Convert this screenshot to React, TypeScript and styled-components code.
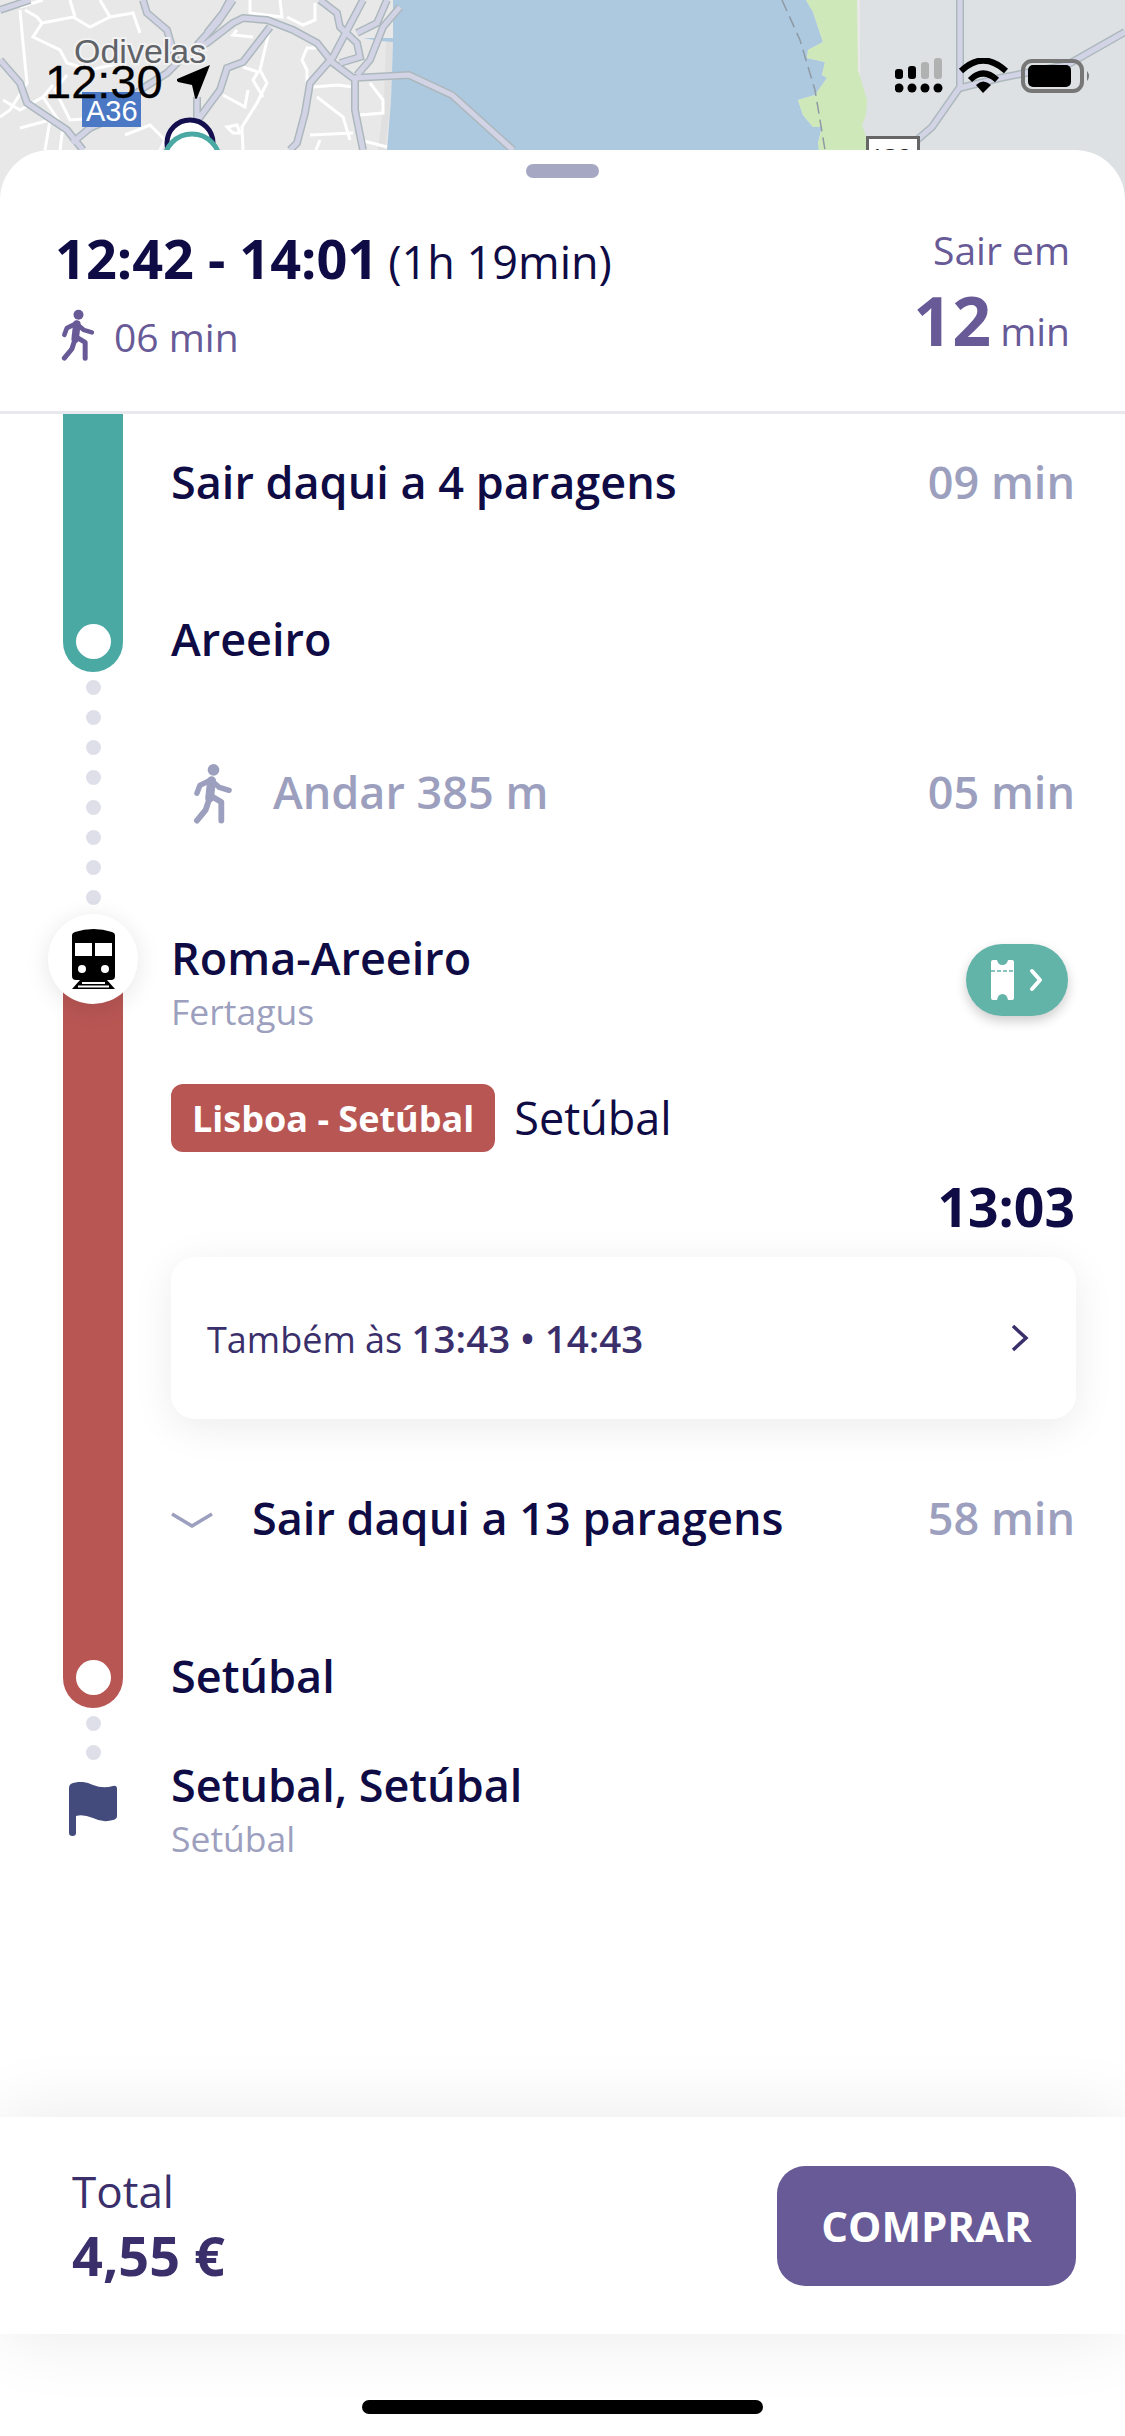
import React from "react";
import styled, { createGlobalStyle } from "styled-components";

const GlobalStyle = createGlobalStyle`
  html, body {
    margin: 0;
    padding: 0;
    background: #fff;
    font-family: "Open Sans", "Liberation Sans", sans-serif;
  }
  * { box-sizing: border-box; }
`;

const NAVY = "#0f0b45";
const INDIGO = "#3a2f6b";
const PURPLE = "#675a97";
const MUTED = "#9c9fbe";
const TEAL = "#4ba9a4";
const RED = "#b85654";

const Page = styled.div`
  width: 1125px;
  height: 2436px;
  display: flex;
  flex-direction: column;
  overflow: hidden;
  background: #fff;
`;

/* map + status bar */
const MapArea = styled.div`
  position: relative;
  flex: none;
  height: 200px;
  margin-bottom: -50px;
  background: #e8e8e8;
`;

const MapDrawing = styled.svg`
  display: block;
  width: 1125px;
  height: 200px;
`;

const StatusBar = styled.div`
  position: absolute;
  top: 58px;
  left: 45px;
  right: 34px;
  display: flex;
  justify-content: space-between;
  align-items: flex-start;
`;

const StatusTime = styled.div`
  display: flex;
  align-items: center;
  gap: 14px;
  font-family: "Liberation Sans", sans-serif;
  font-size: 47px;
  line-height: 48px;
  color: #000;
  -webkit-text-stroke: 0.3px #000;
`;

/* bottom sheet */
const Sheet = styled.div`
  position: relative;
  flex: 1;
  min-height: 0;
  display: flex;
  flex-direction: column;
  background: #fff;
  border-radius: 50px 50px 0 0;
`;

const Handle = styled.div`
  flex: none;
  width: 73px;
  height: 14px;
  margin: 14px auto 0;
  border-radius: 7px;
  background: #a5a7c3;
`;

const Summary = styled.header`
  flex: none;
  height: 236px;
  padding: 50px 55px 0 55px;
  display: flex;
  justify-content: space-between;
  border-bottom: 3px solid #e8e8ee;
`;

const SummaryLeft = styled.div`
  display: flex;
  flex-direction: column;
  gap: 23px;
`;

const TripTime = styled.div`
  display: flex;
  align-items: baseline;
  gap: 10px;
  height: 60px;
  color: ${NAVY};
`;

const TripHours = styled.span`
  font-size: 54px;
  line-height: 60px;
  font-weight: 700;
`;

const TripDuration = styled.span`
  font-size: 45px;
  line-height: 60px;
`;

const WalkSummary = styled.div`
  display: flex;
  align-items: center;
  gap: 18px;
  padding-left: 6px;
  height: 50px;
  color: ${PURPLE};
  font-size: 39px;
`;

const SummaryRight = styled.div`
  display: flex;
  flex-direction: column;
  align-items: flex-end;
  margin-top: -3px;
  color: ${PURPLE};
  font-size: 39px;
  line-height: 50px;
`;

const LeaveIn = styled.div`
  display: flex;
  align-items: baseline;
  gap: 9px;
  height: 72px;
  margin-top: 9px;
  line-height: 72px;
`;

const LeaveNumber = styled.span`
  font-size: 68px;
  font-weight: 700;
`;

/* timeline */
const Timeline = styled.div`
  flex: 1;
  min-height: 0;
  display: flex;
  gap: 48px;
  padding: 0 50px 0 63px;
`;

const Rail = styled.div`
  flex: none;
  width: 60px;
  display: flex;
  flex-direction: column;
  align-items: center;
`;

const LineBar = styled.div<{ $color: string; $height: number; $offset?: number }>`
  position: relative;
  flex: none;
  width: 60px;
  height: ${(p) => p.$height}px;
  margin-top: ${(p) => p.$offset ?? 0}px;
  padding-bottom: 13px;
  display: flex;
  justify-content: center;
  align-items: flex-end;
  background: ${(p) => p.$color};
  border-radius: 0 0 30px 30px;
`;

const StopDot = styled.div`
  width: 35px;
  height: 35px;
  border-radius: 50%;
  background: #fff;
`;

const TrainBadge = styled.div`
  position: absolute;
  top: -45px;
  left: -15px;
  width: 90px;
  height: 90px;
  display: flex;
  align-items: center;
  justify-content: center;
  border-radius: 50%;
  background: #fff;
  box-shadow: 0 4px 24px rgba(0, 0, 0, 0.1);
`;

const DotColumn = styled.div<{ $gap: number }>`
  flex: none;
  display: flex;
  flex-direction: column;
  gap: ${(p) => p.$gap}px;
  margin-top: 8px;
`;

const TrailDot = styled.div`
  width: 15px;
  height: 15px;
  border-radius: 50%;
  background: #dfdfea;
`;

const FlagIcon = styled.svg`
  flex: none;
  margin-top: 22px;
`;

const Steps = styled.div`
  flex: 1;
  min-width: 0;
  display: flex;
  flex-direction: column;
`;

const Row = styled.div<{ $height: number }>`
  flex: none;
  height: ${(p) => p.$height}px;
  display: flex;
  align-items: center;
  justify-content: space-between;
`;

const RowStart = styled.div`
  display: flex;
  align-items: center;
`;

const StepTitle = styled.div`
  padding-bottom: 4px;
  font-size: 45px;
  line-height: 60px;
  font-weight: 600;
  color: ${NAVY};
`;

const StepMinutes = styled.div`
  padding-bottom: 4px;
  font-size: 45px;
  line-height: 60px;
  font-weight: 600;
  color: ${MUTED};
`;

const WalkLabel = styled.div`
  padding-bottom: 4px;
  font-size: 45px;
  line-height: 60px;
  font-weight: 600;
  color: ${MUTED};
`;

const WalkIconSlot = styled.div`
  width: 102px;
  padding-left: 22px;
  display: flex;
`;

const StationRow = styled.div`
  flex: none;
  margin-top: 68px;
  display: flex;
  justify-content: space-between;
  align-items: flex-start;
`;

const Operator = styled.div`
  margin-top: -3px;
  font-size: 35.500px;
  line-height: 44px;
  color: ${MUTED};
`;

const TicketButton = styled.div`
  flex: none;
  width: 102px;
  height: 72px;
  margin: 16px 7px 0 0;
  display: flex;
  align-items: center;
  justify-content: center;
  border-radius: 36px;
  background: #62b3a8;
  box-shadow: 0 5px 12px rgba(0, 0, 0, 0.2);
`;

const LineRow = styled.div`
  flex: none;
  margin-top: 51px;
  display: flex;
  align-items: center;
  gap: 19px;
`;

const LineBadge = styled.div`
  height: 68px;
  padding: 0 21px;
  display: flex;
  align-items: center;
  border-radius: 12px;
  background: ${RED};
  color: #fff;
  font-size: 36px;
  font-weight: 700;
`;

const Direction = styled.div`
  padding-bottom: 2px;
  font-size: 45px;
  color: ${NAVY};
`;

const Departure = styled.div`
  flex: none;
  margin-top: 25px;
  text-align: right;
  font-size: 53.500px;
  line-height: 60px;
  font-weight: 700;
  color: ${NAVY};
`;

const AlsoCard = styled.div`
  flex: none;
  height: 162px;
  margin: 20px -1px 0 0;
  padding: 0 46px 0 36px;
  display: flex;
  align-items: center;
  justify-content: space-between;
  border-radius: 24px;
  background: #fff;
  box-shadow: 0 8px 40px rgba(0, 0, 0, 0.08);
  font-size: 36px;
  color: ${INDIGO};
`;

const AlsoTimes = styled.b`
  font-size: 38.500px;
  font-weight: 600;
`;

const CollapseIcon = styled.svg`
  flex: none;
  margin-right: 39px;
`;

const Destination = styled.div`
  flex: none;
  margin-top: 20px;
`;

/* footer */
const Footer = styled.footer`
  position: relative;
  flex: none;
  height: 217px;
  padding: 0 49px 0 72px;
  display: flex;
  align-items: center;
  justify-content: space-between;
  background: #fff;
  box-shadow: 0 0 70px rgba(0, 0, 0, 0.09);
`;

const TotalBlock = styled.div`
  color: ${INDIGO};
`;

const TotalLabel = styled.div`
  margin-top: -2px;
  font-size: 44px;
  line-height: 60px;
`;

const TotalValue = styled.div`
  font-size: 54px;
  line-height: 68px;
  font-weight: 700;
`;

const BuyButton = styled.button`
  width: 299px;
  height: 120px;
  border: none;
  border-radius: 28px;
  background: ${PURPLE};
  color: #fff;
  font-family: inherit;
  font-size: 42px;
  font-weight: 700;
`;

const HomeArea = styled.div`
  position: relative;
  flex: none;
  height: 102px;
  padding-top: 66px;
  display: flex;
  justify-content: center;
`;

const HomeIndicator = styled.div`
  width: 401px;
  height: 14px;
  border-radius: 7px;
  background: #000;
`;

const minorRoads = [
  "M20 10 L23 43 L27 83 L10 110 L0 117",
  "M25 10 L37 17 L42 23 L33 37 L60 50 L67 63 L90 70 L125 62",
  "M42 23 L73 17 L90 27 L110 17 L133 13 L140 33",
  "M20 7 L43 0 M70 0 L75 17 M100 0 L110 17",
  "M3 100 L20 110 L43 97 L53 85 M43 97 L63 127 L60 150",
  "M67 75 L55 90 L70 120 L100 118",
  "M125 135 L150 125 L165 140 L160 150 M20 128 L50 120 L45 150",
  "M250 0 L250 13 L282 17 L280 0 M237 30 L233 35 L253 37",
  "M315 3 L315 20 L303 25 L287 17 M263 20 L250 13",
  "M270 28 L260 70 L267 83 L257 103 L242 127 L243 150",
  "M243 67 L258 72 L253 80 L263 97 M223 95 L245 107 L248 90",
  "M227 127 L237 125 L240 133 L233 133 Z",
  "M320 48 L307 48 L302 60 L307 70 L307 83",
  "M313 87 L338 85 L353 87 M317 97 L343 117 L350 140 M310 135 L353 133",
  "M360 115 L383 113 L383 100 L370 83 M360 140 L387 147 M320 140 L316 150",
];

const majorRoads = [
  "M197 48 L207 43 L233 23 L243 18 L267 20 L293 30 L317 43 L333 63 L353 78 L409 75 L452 95 L513 150",
  "M363 0 L333 57 L310 83 L305 113 L297 143 L290 150",
  "M270 27 L243 62 L227 68 L220 90 L200 117 L197 122 L197 97",
  "M320 0 L337 13 L340 27 L357 43 L360 57 L340 63",
  "M387 0 L377 23 L357 33",
  "M400 7 L383 27 L370 60 L357 75",
  "M355 80 L355 110 L363 150",
  "M207 33 L223 13 L230 0",
  "M197 45 L218 22 L233 0",
  "M143 0 L147 13 L167 30 L177 63 L167 73 L140 90",
  "M0 60 L20 83 L27 103 L67 130 L83 150",
  "M72 143 L90 128 L113 118 L140 90",
  "M30 0 L0 10",
  "M960 0 L960 87 L932 127 L917 140",
  "M1125 32 L1067 65 L1000 78 L960 88",
];

const Walker = ({ color, width }: { color: string; width: number }) => (
  <svg width={width} height={(width * 64) / 42} viewBox="14 10 42 64">
    <circle cx="35" cy="17" r="6" fill={color} />
    <path d="M33 28 L31 46" fill="none" stroke={color} strokeWidth="9" strokeLinecap="round" />
    <path d="M33 27 L21 33 L18 41 M33 28 L41 35 L51 38" fill="none" stroke={color} strokeWidth="5.500" strokeLinecap="round" strokeLinejoin="round" />
    <path d="M31 46 L27 58 L18 69 M33 44 L43 50 L43 69" fill="none" stroke={color} strokeWidth="6" strokeLinecap="round" strokeLinejoin="round" />
  </svg>
);

const TrainGlyph = () => (
  <svg width="43" height="60" viewBox="0 0 43 60">
    <path d="M0 6 Q0 4 3 3 Q12 0 21.500 0 Q31 0 40 3 Q43 4 43 6 L43 47 Q43 51 39 51 L4 51 Q0 51 0 47 Z" fill="#000" />
    <rect x="3" y="14" width="17" height="13" fill="#fff" />
    <rect x="23" y="14" width="17" height="13" fill="#fff" />
    <circle cx="10" cy="40" r="4" fill="#fff" />
    <circle cx="33" cy="40" r="4" fill="#fff" />
    <path d="M8 51 L35 51 L43 60 L0 60 Z" fill="#000" />
    <path d="M10 54 H33 M6 57.500 H37" stroke="#fff" strokeWidth="2" />
  </svg>
);

const TicketGlyph = () => (
  <svg width="54" height="42" viewBox="0 0 54 42">
    <path d="M3 1 H7 Q8 6 12.500 6 Q17 6 18 1 H22 Q24 1 24 3 V39 Q24 41 22 41 H18 Q17 35 12.500 35 Q8 35 7 41 H3 Q1 41 1 39 V3 Q1 1 3 1 Z" fill="#fff" />
    <path d="M1 12 H24" stroke="#62b3a8" strokeWidth="1.500" strokeDasharray="4 2" />
    <path d="M42 12 L50 21 L42 30" fill="none" stroke="#fff" strokeWidth="4" strokeLinecap="round" strokeLinejoin="round" />
  </svg>
);

const App: React.FC = () => {
  return (
    <Page>
      <GlobalStyle />
      <MapArea>
        <MapDrawing viewBox="0 0 1125 200">
          <rect x="0" y="0" width="396" height="200" fill="#e8e8e8" />
          <rect x="860" y="0" width="265" height="200" fill="#dde1e3" />
          <path d="M386 40 L393 40 L391 100 L385 150 L378 150 L384 100 Z" fill="#e0e0e0" />
          <path d="M393 0 L393 38 L363 38 L380 41 L393 42 L391 100 L383 200 L830 200 L823 150 L818 143 L822 127 L813 127 L803 115 L798 100 L815 95 L827 78 L822 75 L825 62 L807 58 L808 50 L823 42 L813 12 L806 0 Z" fill="#adc9e0" />
          <path d="M806 0 L813 12 L823 42 L808 50 L807 58 L825 62 L822 75 L827 78 L815 95 L798 100 L803 115 L813 127 L822 127 L818 143 L823 200 L870 200 L867 140 L862 125 L866 115 L867 100 L858 70 L857 0 Z" fill="#cfe8b9" />
          <path d="M782 0 L800 40 L815 90 L825 150" fill="none" stroke="#8f9aa5" strokeWidth="1.500" strokeDasharray="12 6" />
          {minorRoads.map((d) => (
            <path key={d} d={d} fill="none" stroke="#fff" strokeWidth="3" />
          ))}
          {majorRoads.map((d) => (
            <path key={d} d={d} fill="none" stroke="#adb8bd" strokeWidth="8" />
          ))}
          {majorRoads.map((d) => (
            <path key={`${d}-fill`} d={d} fill="none" stroke="#d2d4e6" strokeWidth="5" />
          ))}
          <text x="74" y="63" fontFamily="Liberation Sans" fontSize="34" fill="#5f6368" stroke="#f2f2f2" strokeWidth="4" paintOrder="stroke">
            Odivelas
          </text>
          <rect x="82" y="92" width="59" height="35" fill="#4a78c4" />
          <text x="86" y="121" fontFamily="Liberation Sans" fontSize="29" fill="#fff">
            A36
          </text>
          <circle cx="190" cy="143" r="23" fill="#fff" stroke="#14104f" strokeWidth="5" />
          <circle cx="192" cy="162" r="28" fill="#fff" stroke={TEAL} strokeWidth="5" />
          <rect x="867.500" y="137.500" width="51" height="60" fill="#fff" stroke="#666" strokeWidth="3" />
          <text x="874" y="166" fontFamily="Liberation Sans" fontSize="24" fill="#222">
            IC3
          </text>
        </MapDrawing>
        <StatusBar>
          <StatusTime>
            12:30
            <svg width="34" height="34" viewBox="0 0 34 34">
              <path d="M33 0 L0 14 Q-1 15 1 17 L15 20 L18 33 Q19 35 20 33 Z" fill="#000" />
            </svg>
          </StatusTime>
          <svg width="196" height="38" viewBox="0 0 196 38">
            <rect x="0" y="11" width="8" height="10" rx="3" fill="#000" />
            <rect x="13" y="8" width="8" height="13" rx="3" fill="#000" />
            <rect x="26" y="4" width="8" height="17" rx="3" fill="#b0b2b2" />
            <rect x="39" y="0" width="8" height="21" rx="3" fill="#b0b2b2" />
            <circle cx="4" cy="30" r="4.500" fill="#000" />
            <circle cx="17" cy="30" r="4.500" fill="#000" />
            <circle cx="30" cy="30" r="4.500" fill="#000" />
            <circle cx="43" cy="30" r="4.500" fill="#000" />
            <path d="M66 13 Q88 -8 111 13" fill="none" stroke="#000" strokeWidth="6" />
            <path d="M75 22 Q88 9 102 22" fill="none" stroke="#000" strokeWidth="6" />
            <path d="M81 27 Q88 20 96 27 L88 35 Z" fill="#000" />
            <rect x="128" y="3" width="59" height="30" rx="9" fill="none" stroke="#777" strokeWidth="4" />
            <rect x="133" y="7" width="43" height="22" rx="5" fill="#000" />
            <path d="M192 13 Q196 18 192 23 Z" fill="#777" />
          </svg>
        </StatusBar>
      </MapArea>

      <Sheet>
        <Handle />
        <Summary>
          <SummaryLeft>
            <TripTime>
              <TripHours>12:42 - 14:01</TripHours>
              <TripDuration>(1h 19min)</TripDuration>
            </TripTime>
            <WalkSummary>
              <Walker color={PURPLE} width={35} />
              06 min
            </WalkSummary>
          </SummaryLeft>
          <SummaryRight>
            Sair em
            <LeaveIn>
              <LeaveNumber>12</LeaveNumber>
              min
            </LeaveIn>
          </SummaryRight>
        </Summary>

        <Timeline>
          <Rail>
            <LineBar $color={TEAL} $height={258}>
              <StopDot />
            </LineBar>
            <DotColumn $gap={15}>
              {Array.from({ length: 8 }, (_, i) => (
                <TrailDot key={i} />
              ))}
            </DotColumn>
            <LineBar $color={RED} $height={749} $offset={54}>
              <TrainBadge>
                <TrainGlyph />
              </TrainBadge>
              <StopDot />
            </LineBar>
            <DotColumn $gap={14}>
              <TrailDot />
              <TrailDot />
            </DotColumn>
            <FlagIcon width="48" height="54" viewBox="0 0 48 54">
              <path d="M0 6 Q0 2 4 1 Q14 -2 24 3 Q34 7 44 4 Q48 3 48 7 V34 Q48 37 44 38 Q34 41 24 36 Q14 32 7 34 V51 Q7 54 3.500 54 Q0 54 0 51 Z" fill="#434a7c" />
            </FlagIcon>
          </Rail>

          <Steps>
            <Row $height={140}>
              <StepTitle>Sair daqui a 4 paragens</StepTitle>
              <StepMinutes>09 min</StepMinutes>
            </Row>
            <Row $height={174}>
              <StepTitle>Areeiro</StepTitle>
            </Row>
            <Row $height={132}>
              <RowStart>
                <WalkIconSlot>
                  <Walker color={MUTED} width={41} />
                </WalkIconSlot>
                <WalkLabel>Andar 385 m</WalkLabel>
              </RowStart>
              <StepMinutes>05 min</StepMinutes>
            </Row>

            <StationRow>
              <div>
                <StepTitle>Roma-Areeiro</StepTitle>
                <Operator>Fertagus</Operator>
              </div>
              <TicketButton>
                <TicketGlyph />
              </TicketButton>
            </StationRow>

            <LineRow>
              <LineBadge>Lisboa - Setúbal</LineBadge>
              <Direction>Setúbal</Direction>
            </LineRow>

            <Departure>13:03</Departure>

            <AlsoCard>
              <span>
                Também às <AlsoTimes>13:43 • 14:43</AlsoTimes>
              </span>
              <svg width="20" height="28" viewBox="0 0 20 28">
                <path d="M3 2 L16 14 L3 26" fill="none" stroke={INDIGO} strokeWidth="3.500" />
              </svg>
            </AlsoCard>

            <Row $height={202}>
              <RowStart>
                <CollapseIcon width="42" height="16" viewBox="0 0 42 16">
                  <path d="M1 2 L21 14 L41 2" fill="none" stroke={MUTED} strokeWidth="3.500" />
                </CollapseIcon>
                <StepTitle>Sair daqui a 13 paragens</StepTitle>
              </RowStart>
              <StepMinutes>58 min</StepMinutes>
            </Row>
            <Row $height={114}>
              <StepTitle>Setúbal</StepTitle>
            </Row>
            <Destination>
              <StepTitle>Setubal, Setúbal</StepTitle>
              <Operator>Setúbal</Operator>
            </Destination>
          </Steps>
        </Timeline>

        <Footer>
          <TotalBlock>
            <TotalLabel>Total</TotalLabel>
            <TotalValue>4,55 €</TotalValue>
          </TotalBlock>
          <BuyButton>COMPRAR</BuyButton>
        </Footer>
        <HomeArea>
          <HomeIndicator />
        </HomeArea>
      </Sheet>
    </Page>
  );
};

export default App;
